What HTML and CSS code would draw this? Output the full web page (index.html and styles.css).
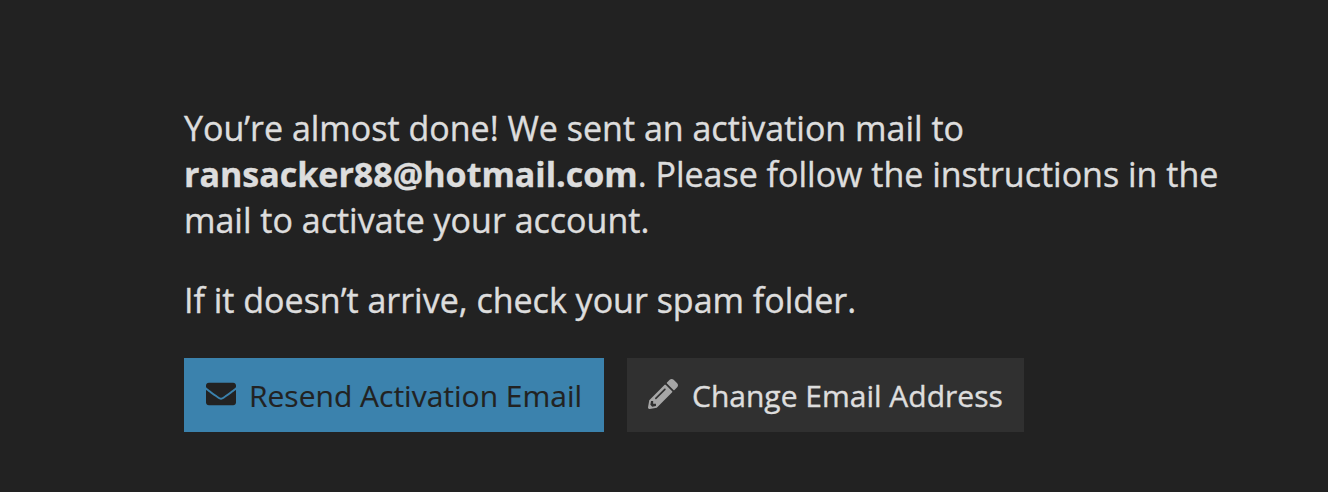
FILE: index.html
```html
<!DOCTYPE html>
<html lang="en">
<head>
<meta charset="utf-8">
<title>Account activation</title>
<link rel="stylesheet" href="styles.css">
</head>
<body>
<main class="notice">
<p class="text">You’re almost done! We sent an activation mail to<br><strong>ransacker88@hotmail.com</strong>. Please follow the instructions in the<br>mail to activate your account.</p>
<p class="text">If it doesn’t arrive, check your spam folder.</p>
<div class="actions">
<button class="button primary"><svg class="icon" viewBox="0 0 512 512"><path d="M502.3 190.8c3.9-3.1 9.7-.2 9.7 4.7V400c0 26.500-21.500 48-48 48H48c-26.500 0-48-21.500-48-48V195.600c0-5 5.700-7.800 9.700-4.700 22.400 17.400 52.100 39.500 154.100 113.600 21.100 15.400 56.700 47.800 92.200 47.600 35.700.3 72-32.800 92.300-47.600 102-74.100 131.600-96.300 154-113.700zM256 320c23.200.4 56.600-29.200 73.400-41.400 132.700-96.300 142.800-104.700 173.400-128.700 5.800-4.500 9.200-11.500 9.200-18.900v-19c0-26.500-21.500-48-48-48H48c-26.500 0-48 21.500-48 48v19c0 7.400 3.400 14.300 9.200 18.900 30.600 23.900 40.700 32.400 173.400 128.700 16.800 12.200 50.200 41.800 73.400 41.400z"/></svg><span>Resend Activation Email</span></button>
<button class="button secondary"><svg class="icon" viewBox="0 0 512 512"><path d="M497.900 142.100l-46.100 46.100c-4.700 4.700-12.300 4.700-17 0l-111-111c-4.700-4.700-4.700-12.300 0-17l46.100-46.100c18.700-18.700 49.100-18.700 67.900 0l60.100 60.100c18.800 18.700 18.800 49.100 0 67.900zM284.200 99.800L21.600 362.400.4 483.900c-2.900 16.400 11.400 30.600 27.800 27.800l121.500-21.300 262.600-262.600c4.700-4.700 4.700-12.300 0-17l-111-111c-4.800-4.700-12.400-4.700-17.100 0zM124.100 339.900c-5.500-5.500-5.500-14.300 0-19.800l154-154c5.500-5.500 14.300-5.500 19.800 0s5.500 14.300 0 19.800l-154 154c-5.500 5.500-14.300 5.500-19.800 0zM88 424h48v36.300l-64.500 11.300-31.100-31.100L51.700 376H88v48z"/></svg><span>Change Email Address</span></button>
</div>
</main>
</body>
</html>
```

FILE: styles.css
```css
body {
  margin: 0;
  background: #222;
  color: #ddd;
  font-family: "Open Sans", sans-serif;
  -webkit-text-stroke: 0.4px currentColor;
}
.notice {
  padding: 105px 100px 0 184px;
}
.text {
  margin: 0 0 34px;
  font-size: 34px;
  line-height: 46px;
  white-space: nowrap;
}
.actions {
  display: flex;
  gap: 23px;
  padding-top: 1px;
}
.button {
  display: flex;
  align-items: center;
  box-sizing: border-box;
  height: 74px;
  border: 0;
  padding: 0 22px;
  gap: 13px;
  font: 30px "Open Sans", sans-serif;
  white-space: nowrap;
}
.primary {
  width: 420px;
  background: #3b82ad;
  color: #222;
  -webkit-text-stroke-width: 0.15px;
}
.secondary {
  width: 397px;
  padding-left: 21px;
  gap: 14px;
  background: #303030;
  color: #ddd;
}
.icon {
  width: 30px;
  height: 30px;
  flex: none;
  margin-bottom: 2px;
  fill: currentColor;
}
.secondary .icon {
  fill: #a6a6a6;
}
```
